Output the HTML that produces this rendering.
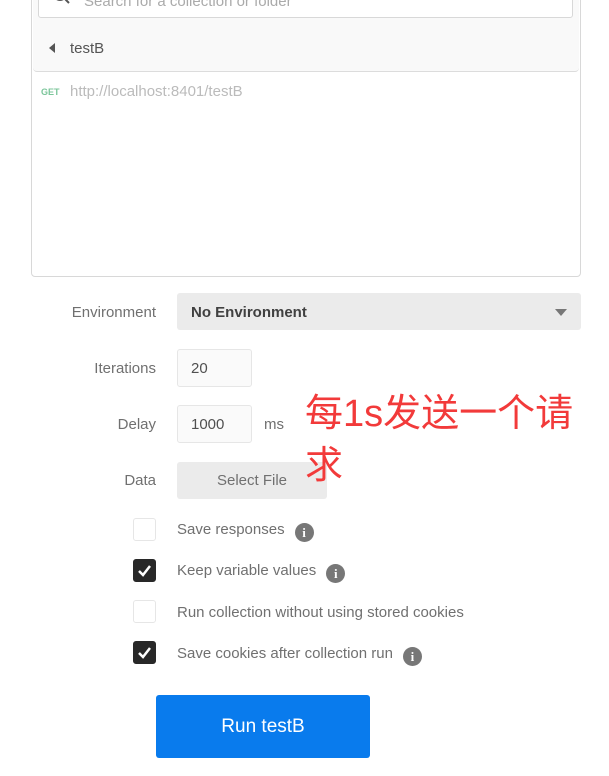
<!DOCTYPE html>
<html><head><meta charset="utf-8"><style>
*{margin:0;padding:0;box-sizing:border-box}
body{width:609px;height:776px;background:#fff;font-family:"Liberation Sans",sans-serif;position:relative;overflow:hidden;color:#505050}
.a{position:absolute}
.lbl{position:absolute;right:453px;font-size:15px;color:#707070;text-align:right}
.cb{position:absolute;left:133px;width:23px;height:23px;border:1px solid #e6e6e6;border-radius:3px;background:#fff}
.cb.on{background:#282828;border-color:#282828}
.ct{position:absolute;left:177px;font-size:15px;color:#707070}
.info{display:inline-block;width:19px;height:19px;border-radius:50%;background:#777;color:#fff;font-size:13px;font-weight:bold;text-align:center;line-height:19px;font-family:"Liberation Serif",serif;margin-left:10px;vertical-align:-3px}
</style></head><body>
<div class="a" style="left:31px;top:-5px;width:550px;height:282px;border:1px solid #d8d8d8;border-radius:4px"></div>
<div class="a" style="left:33px;top:-5px;width:546px;height:77px;background:#f9f9f9;border-bottom:1px solid #dcdcdc;border-radius:0 0 4px 4px"></div>
<div class="a" style="left:38px;top:-20px;width:535px;height:38px;background:#fff;border:1px solid #d8d8d8;border-radius:3px"></div>
<svg class="a" style="left:52px;top:-6px" width="22" height="14"><circle cx="8" cy="0" r="6" fill="none" stroke="#555" stroke-width="2"/><line x1="12" y1="4" x2="17" y2="9" stroke="#555" stroke-width="2"/></svg>
<div class="a" style="left:84px;top:-7px;font-size:15px;color:#aaa">Search for a collection or folder</div>
<svg class="a" style="left:49px;top:43px" width="8" height="10"><polygon points="6,0 6,10 0,5" fill="#555"/></svg>
<div class="a" style="left:70px;top:40px;font-size:15px;color:#555">testB</div>
<div class="a" style="left:41px;top:87px;font-size:9px;font-weight:bold;color:#7bc59a">GET</div>
<div class="a" style="left:70px;top:83px;font-size:15px;color:#bbb">http://localhost:8401/testB</div>

<div class="lbl" style="top:304px">Environment</div>
<div class="a" style="left:177px;top:293px;width:404px;height:37px;background:#ebebeb;border-radius:3px"></div>
<div class="a" style="left:191px;top:304px;font-size:15px;font-weight:bold;color:#404040">No Environment</div>
<svg class="a" style="left:555px;top:309px" width="12" height="7"><polygon points="0,0 12,0 6,7" fill="#777"/></svg>

<div class="lbl" style="top:360px">Iterations</div>
<div class="a" style="left:177px;top:349px;width:75px;height:38px;background:#fafafa;border:1px solid #e6e6e6;border-radius:3px"></div>
<div class="a" style="left:191px;top:360px;font-size:15px;color:#505050">20</div>

<div class="lbl" style="top:416px">Delay</div>
<div class="a" style="left:177px;top:405px;width:75px;height:38px;background:#fafafa;border:1px solid #e6e6e6;border-radius:3px"></div>
<div class="a" style="left:191px;top:416px;font-size:15px;color:#505050">1000</div>
<div class="a" style="left:264px;top:416px;font-size:15px;color:#707070">ms</div>

<div class="lbl" style="top:472px">Data</div>
<div class="a" style="left:177px;top:462px;width:150px;height:37px;background:#ebebeb;border-radius:3px;text-align:center;line-height:37px;font-size:15px;color:#707070">Select File</div>

<div class="a" style="left:305px;top:388px;width:300px;font-size:38px;line-height:52px;color:#f23a3a;font-family:'Liberation Sans','Noto Sans CJK SC',sans-serif">每1s发送一个请<br>求</div>

<div class="cb" style="top:518px"></div><div class="ct" style="top:521px">Save responses<span class="info">i</span></div>
<div class="cb on" style="top:559px"><svg width="21" height="21"><polyline points="5,11 9,15 16,6" fill="none" stroke="#fff" stroke-width="2.5"/></svg></div><div class="ct" style="top:562px">Keep variable values<span class="info">i</span></div>
<div class="cb" style="top:600px"></div><div class="ct" style="top:604px">Run collection without using stored cookies</div>
<div class="cb on" style="top:641px"><svg width="21" height="21"><polyline points="5,11 9,15 16,6" fill="none" stroke="#fff" stroke-width="2.5"/></svg></div><div class="ct" style="top:645px">Save cookies after collection run<span class="info">i</span></div>

<div class="a" style="left:156px;top:695px;width:214px;height:63px;background:#097bed;border-radius:3px;color:#fff;font-size:19px;text-align:center;line-height:64px">Run testB</div>
</body></html>
